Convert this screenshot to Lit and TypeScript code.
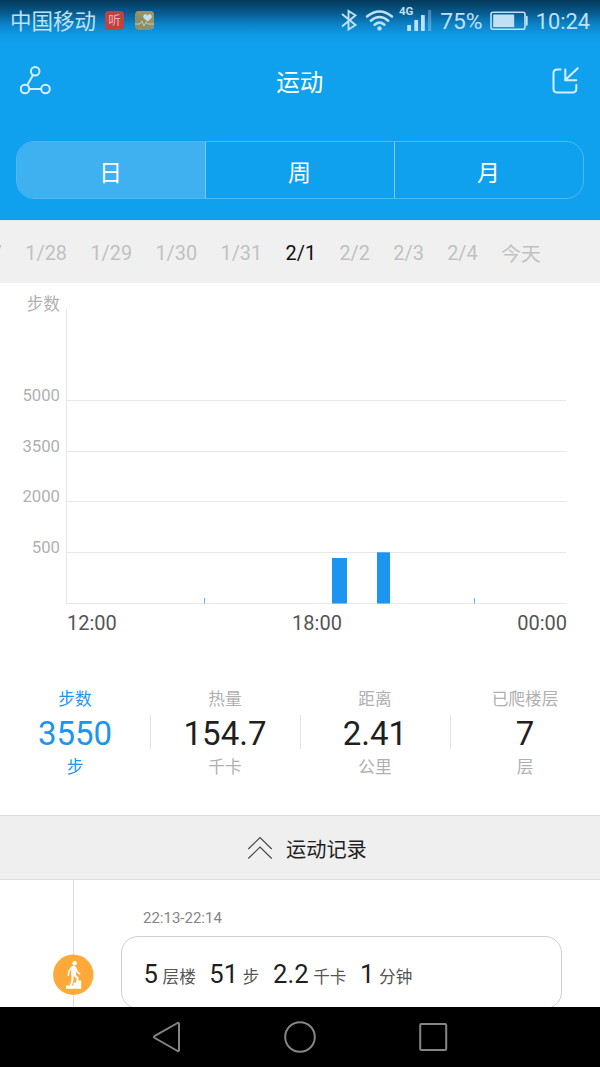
import { LitElement, html, css, svg } from "lit";
import { customElement, state } from "lit/decorators.js";
import { classMap } from "lit/directives/class-map.js";

const shared = css`
  * { box-sizing: border-box; }
  svg { display: block; flex: none; }
`;

@customElement("status-bar")
class StatusBar extends LitElement {
  static styles = [shared, css`
    :host { display: flex; height: 41px; padding: 0 10px 0 10px; align-items: center; color: #c0e0f3; font-size: 22px; }
    .carrier { font-size: 21.5px; line-height: 41px; margin-right: 9px; margin-top: 2px; white-space: nowrap; }
    .app { width: 19px; height: 19px; border-radius: 4px; margin-right: 11px; margin-top: -1px; display: flex; align-items: center; justify-content: center; overflow: hidden; }
    .listen { background: #bd4342; color: #e9b3b3; font-size: 12.5px; line-height: 19px; }
    .spacer { flex: 1; }
    .text { line-height: 41px; margin-top: 1px; white-space: nowrap; }
    .percent { font-size: 22.8px; width: 44px; }
    .clock { font-size: 21.8px; }
    .battery { margin: 0 7.5px 0 6px; }
  `];
  render() {
    return html`
      <span class="carrier">中国移动</span>
      <span class="app listen">听</span>
      <span class="app"><svg width="19" height="19" viewBox="0 0 19 19">
        <rect width="19" height="19" fill="#8c8f68"/><path d="M0 0L19 19V0Z" fill="#9a9465"/>
        <path d="M12.6 10.5L8.9 7.2C6.9 4.6 10.5 1.8 12.6 4.4C14.7 1.8 18.3 4.6 16.3 7.2Z" fill="#c0dfef"/>
        <path d="M0 13H5L7 10L9 15L11 11L12.5 13H19" fill="none" stroke="#b9cbb9" stroke-width="1"/>
      </svg></span>
      <span class="spacer"></span>
      <svg width="101" height="41" viewBox="340 0 101 41" fill="none" stroke="#c0e0f3">
        <path d="M343 14L356.5 25L349.5 29.5V11L356.5 15.3L343 26.5" stroke-width="1.9"/>
        <g stroke-width="2.5" stroke-linecap="round"><path d="M368 16.5Q380.5 6.5 393 16.5"/><path d="M371.8 20.7Q380.5 13.2 389.2 20.7"/><path d="M375.6 24.7Q380.5 20.6 385.4 24.7"/></g>
        <circle cx="380.5" cy="28.4" r="2.2" fill="#c0e0f3" stroke="none"/>
        <g fill="#c0e0f3" stroke="none"><rect x="408.2" y="25" width="3.8" height="6" rx=".6"/><rect x="415.3" y="20" width="3.8" height="11" rx=".6"/><rect x="422" y="15" width="3.8" height="16" rx=".6"/><rect x="429" y="10" width="3.2" height="21" rx=".6" opacity=".35"/>
        <text x="400" y="15.3" font-size="11.5" font-weight="700" font-family="Roboto, sans-serif">4G</text></g>
      </svg>
      <span class="text percent">75%</span>
      <svg class="battery" width="38" height="41" viewBox="491 0 38 41">
        <rect x="492" y="12.3" width="34" height="17" rx="2" fill="none" stroke="#c0e0f3" stroke-width="1.6"/>
        <rect x="494.2" y="14.5" width="21" height="12.6" fill="#c0e0f3"/><path d="M527 16h.7q.8 0 .8 .8v8q0 .8-.8 .8H527z" fill="#c0e0f3" stroke="#c0e0f3" stroke-width=".4"/>
      </svg>
      <span class="text clock">10:24</span>`;
  }
}

@customElement("step-chart")
class StepChart extends LitElement {
  static styles = [shared, css`
    :host { display: grid; grid-template-columns: 60px 507px; grid-template-rows: 321px 40px; column-gap: 0; color: #b0b0b0; }
    .ylabels { display: flex; flex-direction: column; align-items: flex-end; font-size: 16.7px; line-height: 20px; padding-top: 12px; }
    .unit { font-size: 16.7px; margin-bottom: 71.2px; }
    .y { margin-bottom: 30.6px; }
    .xlabels { grid-column: 2; display: flex; justify-content: space-between; padding-left: 7px; color: #555; font-size: 20px; line-height: 39px; }
  `];
  lines = [400.5, 451.5, 501.5, 552.5, 603.5];
  bars = [
    { x: 332, y: 558, w: 15, c: "#1c95f0" }, { x: 377, y: 552.3, w: 13, c: "#1c95f0" },
    { x: 204, y: 598, w: 1, c: "#62b9f7" }, { x: 474, y: 598, w: 1, c: "#62b9f7" },
  ];
  render() {
    return html`
      <div class="ylabels"><span class="unit">步数</span>${[5000, 3500, 2000, 500].map(v => html`<span class="y">${v}</span>`)}</div>
      <svg width="507" height="321" viewBox="60 283 507 321">
        ${this.lines.map(y => svg`<path d="M66 ${y}H566.5" stroke="#e8e8e8"/>`)}
        <path d="M66.5 308.5V604" stroke="#e6e6e6"/>
        ${this.bars.map(b => svg`<rect x=${b.x} y=${b.y} width=${b.w} height=${603.5 - b.y} fill=${b.c}/>`)}
      </svg>
      <div class="xlabels"><span>12:00</span><span>18:00</span><span>00:00</span></div>`;
  }
}

@customElement("app-root")
class AppRoot extends LitElement {
  static styles = [shared, css`
    :host { display: flex; flex-direction: column; width: 600px; height: 1067px; overflow: hidden; background: #fff; font-family: Roboto, "Noto Sans CJK SC", sans-serif; color: #1f1f1f; }
    .top { height: 220px; flex: none; background: linear-gradient(#04395a 0, #07588a 12px, #0b82c6 24px, #0f9bea 36px, #0fa0ee 42px); color: #fff; }
    .titlebar { display: flex; align-items: center; justify-content: space-between; height: 80px; padding: 0 20.5px 0 20px; }
    .title { font-size: 23.5px; line-height: 80px; padding-top: 3px; margin-left: -3px; }
    .tabs { display: flex; margin: 20px 16px 0; height: 58px; border: 1px solid #4fb8f2; border-radius: 18px; overflow: hidden; }
    .tab { flex: 1; display: flex; align-items: center; justify-content: center; font-size: 23px; padding-top: 1px; padding-right: 1px; border-right: 1px solid #7bcaf6; }
    .tab:last-child { border-right: 0; }
    .tab.on { background: #3fb1f0; }
    .dates { flex: none; height: 63px; background: #f0f0f0; border-top: 1px solid #e5e9ec; display: flex; align-items: center; gap: 23.4px; padding-top: 2px; font-size: 19.85px; color: #c1c1c1; white-space: nowrap; }
    .date:first-child { margin-left: -39.7px; }
    .date:last-child { margin-top: -2px; }
    .date.on { color: #111; }
    .stats { display: flex; height: 171px; flex: none; padding-top: 46px; }
    .stat { width: 150px; display: flex; flex-direction: column; align-items: center; color: #b0b0b0; font-size: 16.7px; line-height: 20px; }
    .value { color: #1f1f1f; font-size: 33px; line-height: 34px; height: 34px; width: 151px; text-align: center; margin: 5px -1px 9px 0; border-right: 1px solid #e4e4e4; padding-top: 2px; }
    .stat:last-child .value { border-right: 0; padding-right: 1px; }
    .stat.on, .stat.on .value { color: #1c95f0; }
    .records { flex: none; height: 65px; background: #efefef; border-top: 1px solid #dcdcdc; border-bottom: 1px solid #dcdcdc; display: flex; align-items: center; gap: 13px; padding-left: 247px; font-size: 20.2px; }
    .records span { padding-top: 2px; }
    .timeline { flex: none; height: 127px; display: flex; overflow: hidden; }
    .rail { width: 121px; flex: none; }
    .time { color: #858585; font-size: 15px; line-height: 20px; margin: 28px 0 8px 22px; }
    .card { width: 441px; height: 73px; border: 1px solid #cfcfcf; border-radius: 17px; display: flex; align-items: baseline; padding: 21.5px 0 0 21.5px; gap: 13.6px; line-height: 30px; }
    .item { display: flex; align-items: baseline; gap: 4.7px; font-size: 16.6px; color: #555; white-space: nowrap; }
    .num { font-size: 25.6px; color: #1f1f1f; }
    .nav { flex: none; height: 60px; background: #000; display: flex; justify-content: center; }
  `];
  @state() tab = "日";
  @state() date = "2/1";
  stats = [["步数", "3550", "步"], ["热量", "154.7", "千卡"], ["距离", "2.41", "公里"], ["已爬楼层", "7", "层"]];
  render() {
    return html`
      <div class="top">
        <status-bar></status-bar>
        <div class="titlebar">
          <svg width="31" height="32" viewBox="20 65 31 32" fill="none" stroke="#d8f0fd" stroke-width="2"><circle cx="35.2" cy="71.2" r="4.3"/><circle cx="25" cy="89" r="4.3"/><circle cx="45.5" cy="89" r="4.3"/><path d="M33 75L27.2 85.2M29.5 89H41"/></svg>
          <span class="title">运动</span>
          <svg width="28" height="30" viewBox="552 66 28 30" fill="none" stroke="#d8f0fd" stroke-width="2" stroke-linecap="round"><path d="M560.5 69.6H557.2Q553.5 69.6 553.5 73.3V88.7Q553.5 92.5 557.2 92.5H572.5Q576.3 92.5 576.3 88.7V85"/><path d="M577.7 68.3L565.3 80M565.3 69.5V80.2H576.3"/></svg>
        </div>
        <div class="tabs">${["日", "周", "月"].map(t => html`<div class=${classMap({ tab: true, on: t === this.tab })} @click=${() => (this.tab = t)}>${t}</div>`)}</div>
      </div>
      <div class="dates">${["1/27", "1/28", "1/29", "1/30", "1/31", "2/1", "2/2", "2/3", "2/4", "今天"].map(d => html`<span class=${classMap({ date: true, on: d === this.date })} @click=${() => (this.date = d)}>${d}</span>`)}</div>
      <step-chart></step-chart>
      <div class="stats">${this.stats.map(([l, v, u], i) => html`<div class=${classMap({ stat: true, on: i === 0 })}><span>${l}</span><span class="value">${v}</span><span>${u}</span></div>`)}</div>
      <div class="records">
        <svg width="26" height="24" viewBox="247 836 26 24" fill="none" stroke="#444" stroke-width="1.1"><path d="M248.3 849L260 837.5L271.7 849M248.3 858.5L260 847L271.7 858.5"/></svg>
        <span>运动记录</span>
      </div>
      <div class="timeline">
        <svg class="rail" width="121" height="127" viewBox="0 880 121 127">
          <path d="M73.5 880V1007" stroke="#dedede"/><circle cx="73.3" cy="974.7" r="20.2" fill="#ffa93b"/>
          <path d="M66 985.5H73.4V982.6H76.5V980.6H81.2V988.7H66Z" fill="#fff"/>
          <circle cx="74.6" cy="963.3" r="2.3" fill="#fff"/>
          <path d="M71.8 966.3Q74.5 965 75.8 967.2L76.2 975.6L71 975.4L71.3 969Z" fill="#fff"/>
          <g fill="none" stroke="#fff" stroke-linecap="round" stroke-linejoin="round"><path d="M71.6 967.5L69 971.2L68.3 975.3M75.6 968L77.2 971.9L79.6 973.8" stroke-width="1.5"/><path d="M72.6 975L72.4 980L70.8 985.5" stroke-width="2.1"/><path d="M74.6 975.5L77.6 977.8L77.3 982" stroke-width="2.1"/></g>
        </svg>
        <div>
          <div class="time">22:13-22:14</div>
          <div class="card">${[["5", "层楼"], ["51", "步"], ["2.2", "千卡"], ["1", "分钟"]].map(([n, u]) => html`<span class="item"><span class="num">${n}</span>${u}</span>`)}</div>
        </div>
      </div>
      <div class="nav"><svg width="300" height="60" viewBox="150 1007 300 60" fill="none" stroke="#858585" stroke-width="2" stroke-linejoin="round"><path d="M154.8 1035.8L177.6 1023Q179 1022.5 179 1024V1050Q179 1051.5 177.6 1051L154.8 1038Q153.2 1037 154.8 1035.8Z"/><circle cx="300" cy="1037" r="14.8"/><rect x="420.2" y="1024" width="26" height="26" rx="1"/></svg></div>`;
  }
}
